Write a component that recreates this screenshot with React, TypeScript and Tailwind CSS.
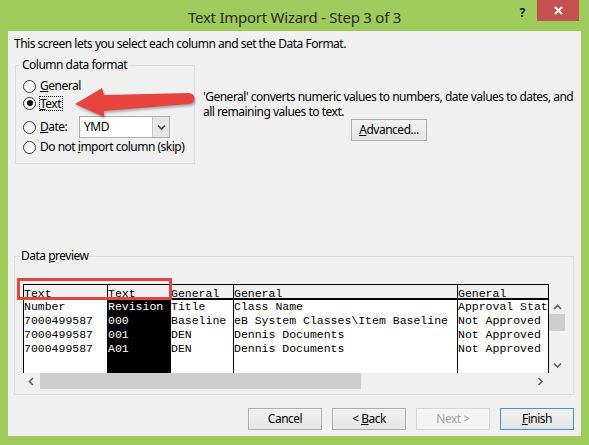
import React from "react";

function Radio({ checked }: { checked?: boolean }) {
  return (
    <span className="w-[13px] h-[13px] shrink-0 rounded-full border border-[#333333] bg-white flex items-center justify-center">
      {checked && <span className="w-[6px] h-[6px] rounded-full bg-[#111111]" />}
    </span>
  );
}

function Chevron({ dir, color = "#606060" }: { dir: "up" | "down" | "left" | "right"; color?: string }) {
  const d =
    dir === "up"
      ? "M1 5 L4.5 1.5 L8 5"
      : dir === "down"
      ? "M1 1.5 L4.5 5 L8 1.5"
      : dir === "left"
      ? "M5 1 L1.5 4.5 L5 8"
      : "M1.5 1 L5 4.5 L1.5 8";
  const vert = dir === "up" || dir === "down";
  return (
    <svg width={vert ? 9 : 7} height={vert ? 7 : 9} viewBox={vert ? "0 0 9 7" : "0 0 7 9"}>
      <path d={d} fill="none" stroke={color} strokeWidth="1.6" />
    </svg>
  );
}

function Btn({ children, kind }: { children: React.ReactNode; kind?: "primary" | "disabled" }) {
  const cls =
    kind === "primary"
      ? "border-[#3d95e0] text-black bg-linear-to-b from-[#f2f2f2] to-[#e5e5e5]"
      : kind === "disabled"
      ? "border-[#d6d6d6] text-[#a3a3a3] bg-[#f4f4f4]"
      : "border-[#adadad] text-black bg-linear-to-b from-[#f2f2f2] to-[#e5e5e5]";
  return (
    <div className={`w-[74px] h-[22px] border flex items-center justify-center leading-[16px] whitespace-pre ${cls}`}>
      {children}
    </div>
  );
}

const cols = [
  { w: "w-[84px]", head: "Text", rows: ["Number", "7000499587", "7000499587", "7000499587"], dark: false },
  { w: "w-[63px]", head: "Text", rows: ["Revision", "000", "001", "A01"], dark: true },
  { w: "w-[63px]", head: "General", rows: ["Title", "Baseline", "DEN", "DEN"], dark: false },
  {
    w: "w-[224px]",
    head: "General",
    rows: ["Class Name", "eB System Classes\\Item Baseline", "Dennis Documents", "Dennis Documents"],
    dark: false,
  },
  { w: "w-[91px]", head: "General", rows: ["Approval Status", "Not Approved", "Not Approved", "Not Approved"], dark: false },
];

export default function App() {
  return (
    <div className="relative w-[589px] h-[445px] bg-[#9fca5c] flex flex-col overflow-hidden font-['Noto_Sans',sans-serif] text-[12px] tracking-[-0.5px] text-black">
      {/* Title bar */}
      <div className="h-[31px] shrink-0 flex items-start">
        <div className="w-[74px] shrink-0" />
        <div className="flex-1 text-center text-[15px] tracking-[-0.25px] leading-[20px] pt-[7px] text-[#2b2b2b] whitespace-nowrap">
          Text Import Wizard - Step 3 of 3
        </div>
        <div className="w-[74px] shrink-0 flex items-start">
          <div className="w-[14px] text-center font-bold text-[12px] leading-[16px] pt-[5px] text-[#1a1a1a]">?</div>
          <div className="ml-[8px] w-[42px] h-[21px] bg-[#c75050] flex items-center justify-center">
            <svg width="9" height="9" viewBox="0 0 9 9">
              <path d="M1 1 L8 8 M8 1 L1 8" stroke="white" strokeWidth="2" />
            </svg>
          </div>
        </div>
      </div>

      {/* Client area */}
      <div className="mx-[8px] h-[405px] shrink-0 bg-[#f0f0f0] flex flex-col pl-[6px]">
        <div className="pt-[5px] leading-[16px] whitespace-nowrap">
          This screen lets you select each column and set the Data Format.
        </div>

        {/* top row */}
        <div className="mt-[5px] flex items-start">
          <fieldset className="ml-[1px] w-[180px] h-[107px] shrink-0 border border-[#dcdcdc]">
            <legend className="ml-[4px] px-[2px] leading-[16px]">Column data format</legend>
            <div className="pl-[7px] pt-[5px] flex flex-col">
              <div className="h-[16px] flex items-center">
                <Radio />
                <span className="ml-[4px] leading-[16px]">
                  <u>G</u>eneral
                </span>
              </div>
              <div className="mt-[1px] h-[16px] flex items-center">
                <Radio checked />
                <span className="ml-[3px] border border-dotted border-black leading-[13px] pr-[1px]">
                  <u>T</u>ext
                </span>
              </div>
              <div className="mt-[5px] h-[22px] flex items-center">
                <Radio />
                <span className="ml-[4px] w-[39px] leading-[16px]">
                  <u>D</u>ate:
                </span>
                <div className="w-[91px] h-[22px] border border-[#abadb3] bg-white flex items-stretch">
                  <div className="flex-1 pl-[4px] flex items-center leading-[16px]">YMD</div>
                  <div className="w-[17px] bg-[#e6e6e6] border-l border-[#c4c4c4] flex items-center justify-center">
                    <Chevron dir="down" color="#444444" />
                  </div>
                </div>
              </div>
              <div className="mt-[1px] h-[16px] flex items-center">
                <Radio />
                <span className="ml-[4px] leading-[16px] whitespace-nowrap">
                  Do not <u>i</u>mport column (skip)
                </span>
              </div>
            </div>
          </fieldset>

          <div className="ml-[8px] w-[372px] shrink-0 mt-[32px] flex flex-col items-center">
            <div className="self-start leading-[15px] whitespace-nowrap">
              'General' converts numeric values to numbers, date values to dates, and
              <br />
              all remaining values to text.
            </div>
            <div className="w-[76px] h-[22px] border border-[#adadad] bg-linear-to-b from-[#f2f2f2] to-[#e5e5e5] flex items-center justify-center leading-[16px]">
              <u>A</u>dvanced...
            </div>
          </div>
        </div>

        {/* Data preview */}
        <fieldset className="mt-[84px] w-[560px] h-[147px] border border-[#dcdcdc]">
          <legend className="ml-[5px] px-[1px] leading-[16px]">
            Data <u>p</u>review
          </legend>
          <div className="pl-[8px] pt-[20px] flex flex-col w-[550px]">
            <div className="flex h-[89px]">
              {/* table */}
              <div className="flex border-l border-t border-black bg-white font-['Liberation_Mono',monospace] text-[11.5px] tracking-normal">
                {cols.map((c, i) => (
                  <div key={i} className={`${c.w} flex flex-col border-r border-black overflow-hidden`}>
                    <div className="h-[13px] bg-[#f0f0f0] border-b-2 border-black box-content overflow-hidden">
                      <div className="leading-[13px] pt-[2px] whitespace-nowrap">{c.head}</div>
                    </div>
                    <div className={`flex-1 ${c.dark ? "bg-black text-white" : "bg-white text-black"}`}>
                      {c.rows.map((r, j) => (
                        <div key={j} className="h-[14px] leading-[14px] whitespace-nowrap">
                          {r}
                        </div>
                      ))}
                    </div>
                  </div>
                ))}
              </div>
              {/* vertical scrollbar */}
              <div className="w-[16px] flex flex-col bg-[#f0f0f0]">
                <div className="h-[16px]" />
                <div className="h-[14px] flex items-center justify-center">
                  <Chevron dir="up" />
                </div>
                <div className="h-[17px] bg-[#cdcdcd]" />
                <div className="flex-1" />
                <div className="h-[16px] flex items-center justify-center">
                  <Chevron dir="down" />
                </div>
              </div>
            </div>
            {/* horizontal scrollbar */}
            <div className="h-[16px] flex items-stretch w-[542px] bg-[#f0f0f0]">
              <div className="w-[17px] flex items-center justify-center">
                <Chevron dir="left" />
              </div>
              <div className="w-[321px] bg-[#cdcdcd]" />
              <div className="flex-1" />
              <div className="w-[17px] flex items-center justify-center">
                <Chevron dir="right" />
              </div>
              <div className="w-[16px]" />
            </div>
          </div>
        </fieldset>

        {/* Buttons */}
        <div className="mt-[13px] pr-[7px] flex justify-end gap-[10px]">
          <Btn>Cancel</Btn>
          <Btn>
            {"< "}
            <u>B</u>ack
          </Btn>
          <Btn kind="disabled">{"Next >"}</Btn>
          <Btn kind="primary">
            <u>F</u>inish
          </Btn>
        </div>
      </div>

      {/* Annotation: red arrow */}
      <svg className="absolute left-[60px] top-[80px] drop-shadow-[1px_2px_1px_rgba(0,0,0,0.3)]" width="140" height="45" viewBox="60 80 140 45">
        <path
          d="M75 104 L102 88 L104 95 L189 93 A5.5 5.5 0 0 1 189 104 L104 111 L104 117 Z"
          fill="#e8443f"
        />
      </svg>
      {/* Annotation: red box */}
      <div className="absolute left-[17px] top-[278px] w-[155px] h-[22px] border-[3px] border-[#e2473f]" />
    </div>
  );
}
